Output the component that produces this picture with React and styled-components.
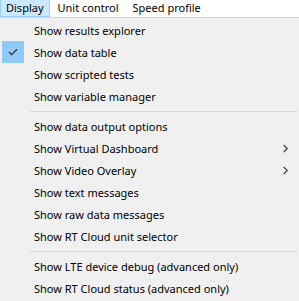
import React from "react";
import styled, { createGlobalStyle } from "styled-components";

const Global = createGlobalStyle`
  html, body { margin: 0; padding: 0; }
  body {
    width: 299px;
    height: 301px;
    overflow: hidden;
    background: #f0f0f0;
    font-family: "Noto Sans", "Open Sans", sans-serif;
    font-size: 11px;
    color: #000;
  }
`;

const Window = styled.div`
  display: flex;
  flex-direction: column;
  width: 299px;
  height: 301px;
`;

const MenuBar = styled.div`
  display: flex;
  gap: 2px;
  height: 17px;
  background: #fff;
  border-bottom: 1px solid #d4d4d4;
`;

const MenuTitle = styled.div`
  box-sizing: border-box;
  display: flex;
  align-items: center;
  height: 17px;
  padding: 0 5px;
  background: ${(p) => (p.$active ? "#cce8ff" : "transparent")};
  border: 1px solid ${(p) => (p.$active ? "#99d1ff" : "transparent")};
  border-top: none;
  line-height: 16px;
  white-space: nowrap;
`;

const Dropdown = styled.div`
  display: flex;
  flex-direction: column;
  padding: 1px 2px 2px 2px;
  background: #f0f0f0;
`;

const Item = styled.div`
  display: grid;
  grid-template-columns: 22px 1fr 20px;
  column-gap: 10px;
  align-items: center;
  height: 22px;
  white-space: nowrap;
`;

const CheckBox = styled.div`
  width: 22px;
  height: 22px;
  display: flex;
  align-items: center;
  justify-content: center;
  background: ${(p) => (p.$checked ? "#90c8f6" : "transparent")};
`;

const Label = styled.span`
  line-height: 22px;
  position: relative;
  top: 1px;
`;

const Arrow = styled.div`
  display: flex;
  align-items: center;
  padding-left: 6px;
  padding-top: 1px;
`;

const Separator = styled.div`
  height: 1px;
  margin: 4px 0 3px 28px;
  background: #d7d7d7;
`;

const Check = () => (
  <svg width="10" height="8" viewBox="0 0 10 8">
    <polyline points="1,4 3.6,6.6 9,1.2" fill="none" stroke="#333" strokeWidth="1.3" />
  </svg>
);

const Chevron = () => (
  <svg width="5" height="9" viewBox="0 0 5 9">
    <polyline points="0.7,0.8 4.2,4.5 0.7,8.2" fill="none" stroke="#333" strokeWidth="1.1" />
  </svg>
);

const groups = [
  [
    { t: "Show results explorer" },
    { t: "Show data table", checked: true },
    { t: "Show scripted tests" },
    { t: "Show variable manager" },
  ],
  [
    { t: "Show data output options" },
    { t: "Show Virtual Dashboard", sub: true },
    { t: "Show Video Overlay", sub: true },
    { t: "Show text messages" },
    { t: "Show raw data messages" },
    { t: "Show RT Cloud unit selector" },
  ],
  [
    { t: "Show LTE device debug (advanced only)" },
    { t: "Show RT Cloud status (advanced only)" },
  ],
];

export default function App() {
  return (
    <Window>
      <Global />
      <MenuBar>
        <MenuTitle $active>Display</MenuTitle>
        <MenuTitle>Unit control</MenuTitle>
        <MenuTitle>Speed profile</MenuTitle>
      </MenuBar>
      <Dropdown>
        {groups.map((g, gi) => (
          <React.Fragment key={gi}>
            {gi > 0 && <Separator />}
            {g.map((it) => (
              <Item key={it.t}>
                <CheckBox $checked={it.checked}>{it.checked && <Check />}</CheckBox>
                <Label>{it.t}</Label>
                <Arrow>{it.sub && <Chevron />}</Arrow>
              </Item>
            ))}
          </React.Fragment>
        ))}
      </Dropdown>
    </Window>
  );
}
